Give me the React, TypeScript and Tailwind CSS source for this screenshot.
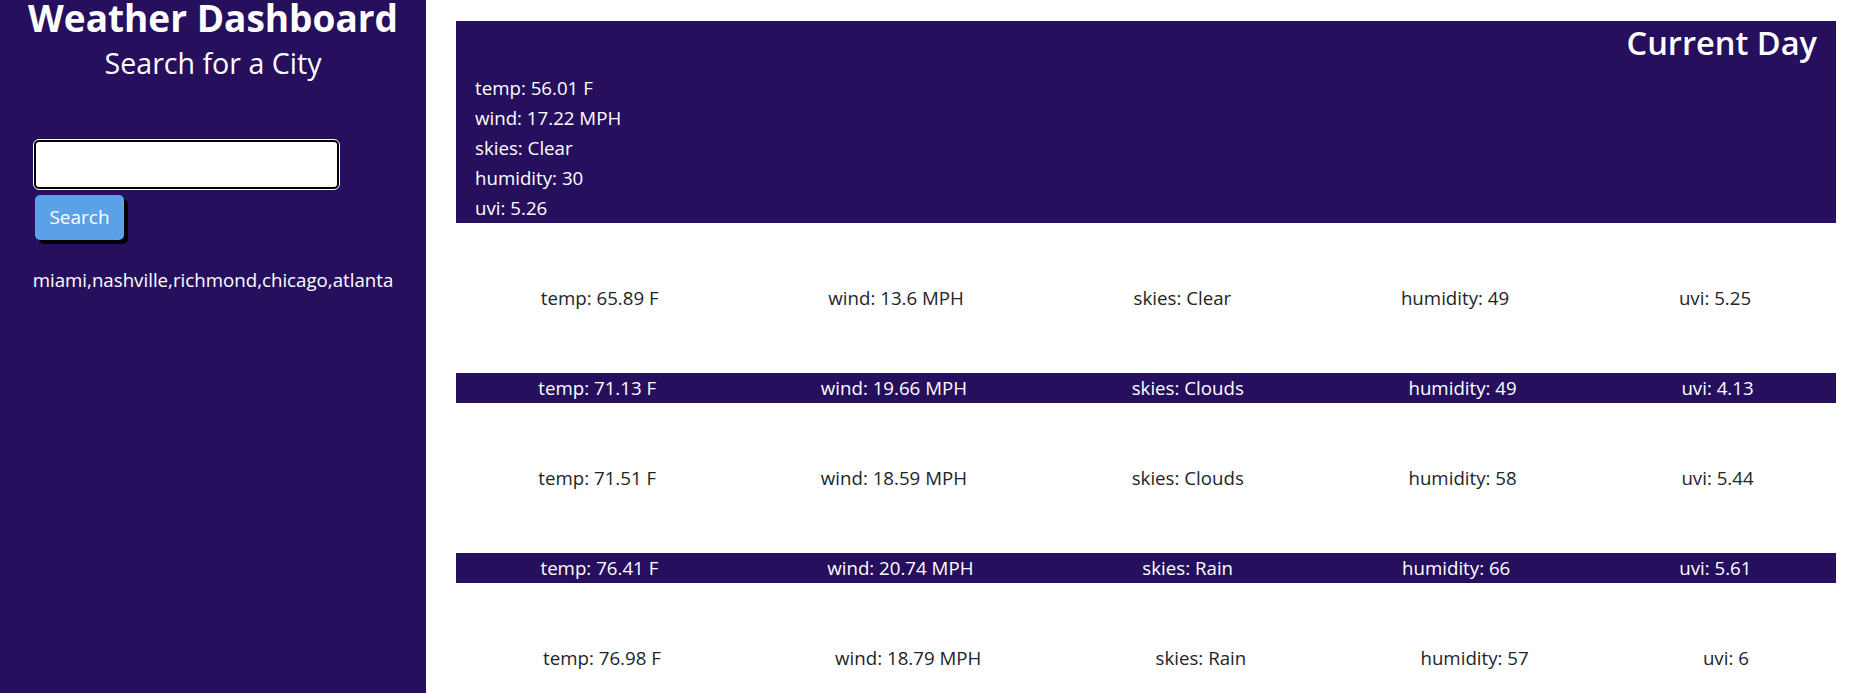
import React from 'react';

type Day = { temp: string; wind: string; skies: string; humidity: number; uvi: string };

const current: Day = { temp: '56.01', wind: '17.22', skies: 'Clear', humidity: 30, uvi: '5.26' };

const forecast: Day[] = [
  { temp: '65.89', wind: '13.6', skies: 'Clear', humidity: 49, uvi: '5.25' },
  { temp: '71.13', wind: '19.66', skies: 'Clouds', humidity: 49, uvi: '4.13' },
  { temp: '71.51', wind: '18.59', skies: 'Clouds', humidity: 58, uvi: '5.44' },
  { temp: '76.41', wind: '20.74', skies: 'Rain', humidity: 66, uvi: '5.61' },
  { temp: '76.98', wind: '18.79', skies: 'Rain', humidity: 57, uvi: '6' },
];

const cities = ['miami', 'nashville', 'richmond', 'chicago', 'atlanta'];

const ForecastRow = ({ day, odd }: { day: Day; odd: boolean }) => (
  <div
    className={
      odd
        ? 'flex justify-around py-[60px] leading-[30px] text-[#212529]'
        : 'flex justify-around leading-[30px] bg-[#260f5d] text-white'
    }
  >
    <span>temp: {day.temp} F</span>
    <span>wind: {day.wind} MPH</span>
    <span>skies: {day.skies}</span>
    <span>humidity: {day.humidity}</span>
    <span>uvi: {day.uvi}</span>
  </div>
);

export default function App() {
  return (
    <div className="flex min-h-screen bg-white font-['Open_Sans',sans-serif] text-[18.7px]">
      <aside className="w-[426px] shrink-0 bg-[#260f5d] text-white">
        <h1 className="pt-px text-center text-[37px] font-bold leading-[34px]">Weather Dashboard</h1>
        <h2 className="mt-[10px] text-center text-[28.6px] leading-[36px]">Search for a City</h2>
        <div className="mt-[59px] flex flex-col items-start pl-[34px]">
          <input
            type="text"
            className="h-[49px] w-[305px] rounded-[5px] border-2 border-black bg-white outline outline-1 outline-white"
          />
          <button className="ml-px mt-[6px] h-[45px] w-[89px] rounded-[5px] bg-[#5aa1e8] text-[19px] text-white shadow-[4px_4px_0_#000]">
            Search
          </button>
        </div>
        <p className="mt-[25px] text-center leading-[30px]">{cities.join(',')}</p>
      </aside>

      <main className="flex-1 pl-[30px] pr-[14px] pt-[21px]">
        <section className="bg-[#260f5d] px-[19px] pt-[2px] text-white">
          <h2 className="text-right text-[32.6px] font-semibold leading-[40px]">Current Day</h2>
          <div className="mt-[10px] leading-[30px]">
            <p>temp: {current.temp} F</p>
            <p>wind: {current.wind} MPH</p>
            <p>skies: {current.skies}</p>
            <p>humidity: {current.humidity}</p>
            <p>uvi: {current.uvi}</p>
          </div>
        </section>
        {forecast.map((day, i) => (
          <ForecastRow key={i} day={day} odd={i % 2 === 0} />
        ))}
      </main>
    </div>
  );
}
